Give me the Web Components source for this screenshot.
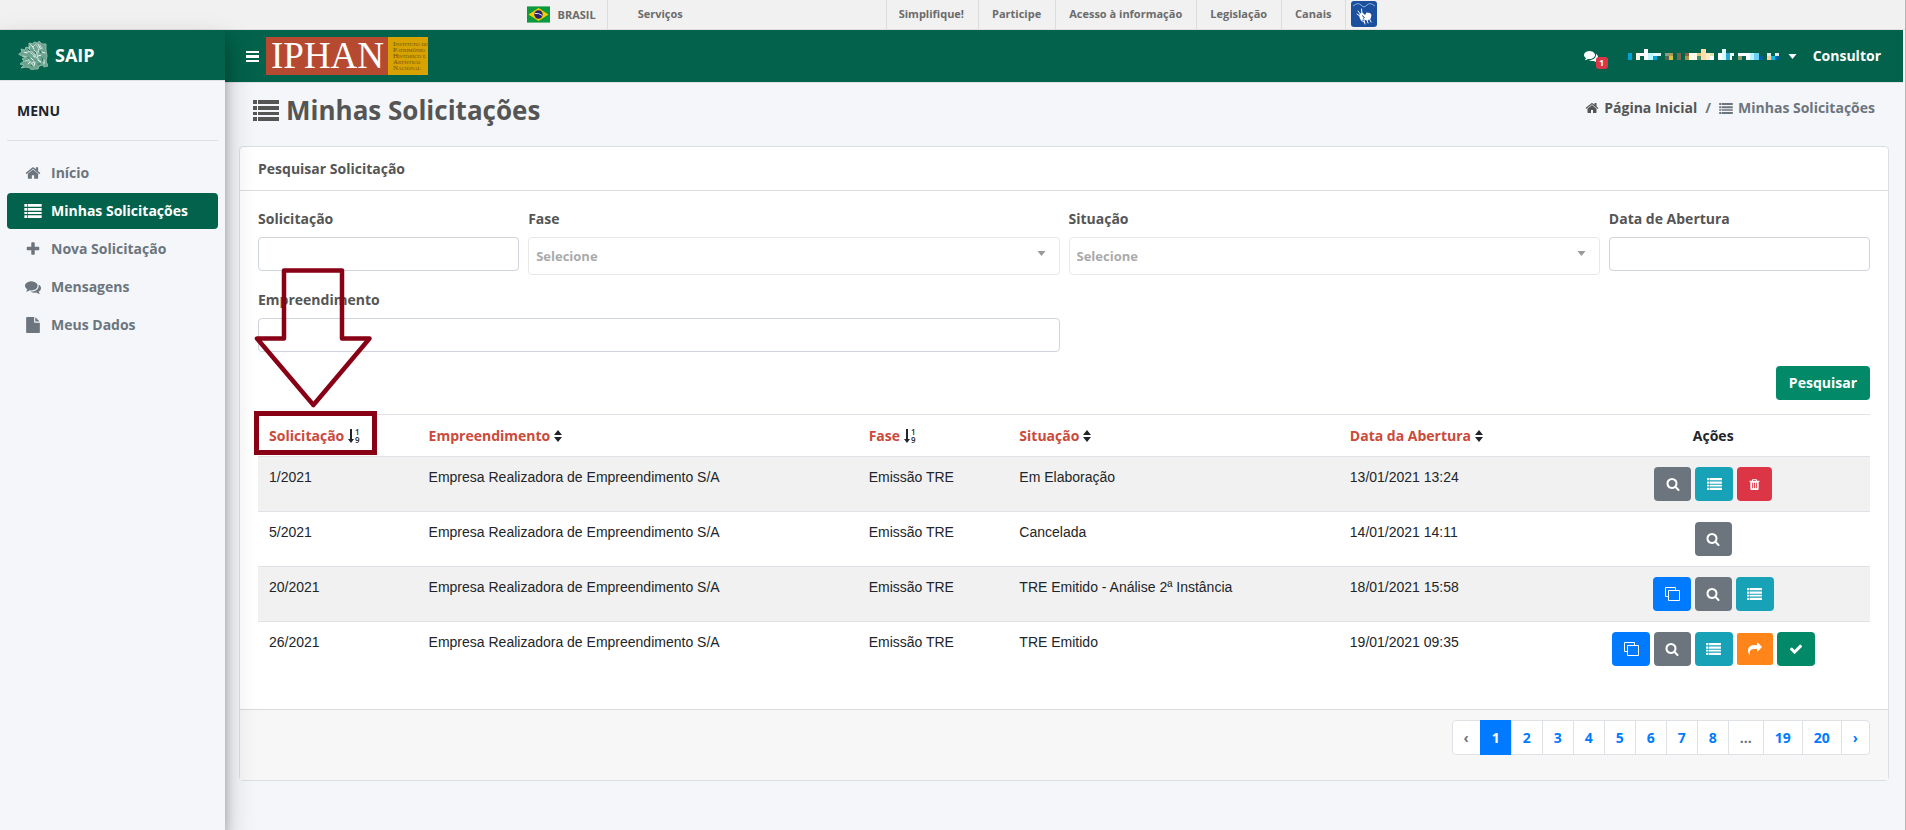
<!DOCTYPE html>
<html lang="pt-BR">
<head>
<meta charset="utf-8">
<title>SAIP - Minhas Solicitações</title>
<style>
  html, body { margin: 0; height: 100%; }
  body { font: 700 14px/22px "Open Sans", "Noto Sans", sans-serif; color: #555; background: #f4f6fa; }
</style>
</head>
<body>
<saip-app></saip-app>

<script>
const define = (name, html, setup) => {
  const tpl = document.createElement('template');
  tpl.innerHTML = `<style>*,*::before{box-sizing:border-box}a{color:inherit;text-decoration:none}</style>${html}`;
  customElements.define(name, class extends HTMLElement {
    constructor() {
      super();
      this.attachShadow({ mode: 'open' }).append(tpl.content.cloneNode(true));
    }
    connectedCallback() {
      if (setup && !this.ready) { this.ready = true; setup(this, this.shadowRoot); }
    }
  });
};

const G = (d) => ['0 0 1792 1792', `<path d="${d}"/>`];
const list = '<path d="M0 0h4v4H0zM5 0h21v4H5zM0 6h4v4H0zM5 6h21v4H5zM0 12h4v3H0zM5 12h21v3H5zM0 17h4v4H0zM5 17h21v4H5z"/>';
const ICONS = {
  list: ['0 0 26 21', list],
  bars: ['0 0 13 11', '<path d="M0 0h13v2H0zM0 4h13v3H0zM0 9h13v2H0z"/>'],
  sort: ['0 0 8 12', '<path d="M4 0l4 5H0zM4 12L0 7h8z"/>'],
  caret: ['0 0 8 5', '<path d="M0 0h8L4 5z"/>'],
  clone: ['0 0 16 16', '<path fill="none" stroke="currentColor" d="M4.500 4.500h11v10h-11zM11.500 4.500v-3h-10v9h3"/>'],
  home: G('M1472 992v480q0 26-19 45t-45 19h-384v-384h-256v384h-384q-26 0-45-19t-19-45v-480q0-1 .5-3t.5-3l575-474 575 474q1 2 1 6zm223-69l-62 74q-8 9-21 11h-3q-13 0-21-7l-692-577-692 577q-12 8-24 7-13-2-21-11l-62-74q-8-10-7-23.500t11-21.500l719-599q32-26 76-26t76 26l244 204v-195q0-14 9-23t23-9h192q14 0 23 9t9 23v408l219 182q10 8 11 21.500t-7 23.500z'),
  plus: G('M1600 736v192q0 40-28 68t-68 28h-416v416q0 40-28 68t-68 28h-192q-40 0-68-28t-28-68v-416h-416q-40 0-68-28t-28-68v-192q0-40 28-68t68-28h416v-416q0-40 28-68t68-28h192q40 0 68 28t28 68v416h416q40 0 68 28t28 68z'),
  comments: G('M1408 768q0 139-94 257t-256.500 186.500-353.500 68.500q-86 0-176-16-124 88-278 128-36 9-86 16h-3q-11 0-20.500-8t-11.500-21q-1-3-1-6.500t.5-6.500 2-6l2.500-5 3.500-5.500 4-5 4.500-5 4-4.500q5-6 23-25t26-29.500 22.500-29 25-38.500 20.500-44q-124-72-195-177t-71-224q0-139 94-257t256.500-186.500 353.500-68.500 353.500 68.500 256.500 186.500 94 257zm384 256q0 120-71 224.500t-195 176.500q10 24 20.500 44t25 38.500 22.500 29 26 29.500 23 25q1 1 4 4.500t4.500 5 4 5 3.500 5.500l2.500 5 2 6 .5 6.500-1 6.500q-3 14-13 22t-22 7q-50-7-86-16-154-40-278-128-90 16-176 16-271 0-472-132 58 4 88 4 161 0 309-45t264-129q125-92 192-212t67-254q0-77-23-152 129 71 204 178t75 230z'),
  file: G('M1152 512v-472q22 14 36 28l408 408q14 14 28 36h-472zm-128 32q0 40 28 68t68 28h544v1056q0 40-28 68t-68 28h-1344q-40 0-68-28t-28-68v-1600q0-40 28-68t68-28h800v544z'),
  search: G('M1216 832q0-185-131.500-316.500t-316.500-131.500-316.500 131.500-131.500 316.500 131.500 316.500 316.500 131.500 316.500-131.500 131.500-316.500zm512 832q0 52-38 90t-90 38q-54 0-90-38l-343-342q-179 124-399 124-143 0-273.500-55.500t-225-150-150-225-55.500-273.500 55.500-273.500 150-225 225-150 273.500-55.500 273.500 55.500 225 150 150 225 55.500 273.500q0 220-124 399l343 343q37 37 37 90z'),
  trash: G('M704 1376v-704q0-14-9-23t-23-9h-64q-14 0-23 9t-9 23v704q0 14 9 23t23 9h64q14 0 23-9t9-23zm256 0v-704q0-14-9-23t-23-9h-64q-14 0-23 9t-9 23v704q0 14 9 23t23 9h64q14 0 23-9t9-23zm256 0v-704q0-14-9-23t-23-9h-64q-14 0-23 9t-9 23v704q0 14 9 23t23 9h64q14 0 23-9t9-23zm-544-992h448l-48-117q-7-9-17-11h-317q-10 2-17 11zm928 32v64q0 14-9 23t-23 9h-96v948q0 83-47 143.500t-113 60.500h-832q-66 0-113-58.500t-47-141.500v-952h-96q-14 0-23-9t-9-23v-64q0-14 9-23t23-9h309l70-167q15-37 54-63t79-26h320q40 0 79 26t54 63l70 167h309q14 0 23 9t9 23z'),
  check: G('M1671 566q0 40-28 68l-724 724-136 136q-28 28-68 28t-68-28l-136-136-362-362q-28-28-28-68t28-68l136-136q28-28 68-28t68 28l294 295 656-657q28-28 68-28t68 28l136 136q28 28 28 68z'),
  share: G('M1792 640q0 26-19 45l-512 512q-19 19-45 19t-45-19-19-45v-256h-224q-98 0-175.500 6t-154 21.500-133 42.500-105.500 69.500-80 101-48.500 138.500-17.500 181q0 55 5 123 0 6 2.500 23.500t2.500 26.500q0 15-8.500 25t-23.500 10q-16 0-28-17-7-9-13-22t-13.500-30-10.500-24q-127-285-127-451 0-199 53-333 162-403 875-403h224v-256q0-26 19-45t45-19 45 19l512 512q19 19 19 45z'),
  numeric: ['0 0 12 14', '<path d="M2 0h2v10h2l-3 4-3-4h2z"/><text x="7" y="6" font-size="8" font-weight="600">1</text><text x="7" y="14" font-size="8" font-weight="600">9</text>'],
};

define('saip-icon', `
  <style>
    :host { display: inline-flex; flex: none; width: 14px; height: 14px; }
    svg { display: block; width: 100%; height: 100%; fill: currentColor; overflow: visible; }
  </style><svg aria-hidden="true"></svg>`, (host, root) => {
  const [box, body] = ICONS[host.getAttribute('name')];
  const svg = root.querySelector('svg');
  svg.setAttribute('viewBox', box);
  svg.innerHTML = body;
});

define('gov-bar', `
  <style>
    :host { display: flex; justify-content: center; height: 30px; padding-right: 1px; background: #f1f1f1; border-bottom: 1px solid #dfdfdf;
            font-size: 11px; line-height: 28px; color: #6b6b6b; white-space: nowrap; }
    a { padding: 0 14px 0 13px; border-right: 1px solid #dcdcdc; }
    .br { display: flex; align-items: center; padding: 0 11px 0 0; gap: 8px; }
    .services { width: 279px; padding-left: 30px; }
    .first { padding-left: 12px; }
    .vlibras { border: 0; padding: 1px 0 0 5px; }
    svg { display: block; flex: none; }
  </style>
  <a class="br" href="#brasil">
    <svg width="23" height="17" viewBox="0 0 23 17"><path fill="#0c9a3e" d="M0 0h23v17H0z"/><path fill="#6dbb84" d="M0 0h23v1H0zM0 16h23v1H0z"/><path fill="#f7c900" d="M11.500 2L21.500 8.500 11.500 15 1.500 8.500z"/><circle cx="11.500" cy="8.500" r="4.200" fill="#2b2173"/><path d="M7.800 7.500q4-.8 7.500 2" fill="none" stroke="#dfe3f2"/></svg>BRASIL</a>
  <a class="services" href="#servicos">Serviços</a>
  <a class="first" href="#simplifique">Simplifique!</a>
  <a href="#participe">Participe</a>
  <a href="#acesso">Acesso à informação</a>
  <a href="#legislacao">Legislação</a>
  <a href="#canais">Canais</a>
  <a class="vlibras" href="#vlibras" aria-label="VLibras">
    <svg width="26" height="26" viewBox="0 0 26 26"><rect width="26" height="26" rx="3" fill="#1b509f"/>
      <path d="M2 5q5-4 8-1t3 1q0 2 3-1t8 1" fill="none" stroke="#8fb0de"/>
      <path d="M7 10l3 4M10.500 8l.5 6M6 13l4 3M10 19l3 2M13 19l1 4M16 19l1 3M18 17l2 4" stroke="#fff" stroke-linecap="round"/>
      <path fill="#fff" d="M8.500 13l3-1.500L14 14l1.500-2.500 3.500.5 1.500 2-1 4-3.500 1.500-3-1-3 .5-1.500-2.500z"/><path d="M11 14.500l2.500 2-1.500 1" fill="none" stroke="#1b509f"/></svg></a>`);

define('nav-item', `
  <style>
    :host { display: block; }
    a { display: flex; align-items: center; height: 36px; margin-bottom: 2px; padding-left: 17px; gap: 9px; border-radius: 4px; color: #6c757d; }
    :host([active]) a { background: #02624b; color: #fff; }
    .i { display: flex; width: 18px; justify-content: center; }
    saip-icon { width: 16px; height: 16px; }
    saip-icon[name=list] { width: 18px; height: 14px; }
  </style>
  <a><span class="i"></span><span><slot></slot></span></a>`, (host, root) => {
  root.querySelector('.i').innerHTML = `<saip-icon name="${host.getAttribute('icon')}"></saip-icon>`;
  root.querySelector('a').href = host.getAttribute('href');
});

define('side-bar', `
  <style>
    :host { display: block; position: relative; z-index: 2; width: 225px; flex: none; background: #f4f6fa;
            box-shadow: 0 14px 28px rgba(0,0,0,.25), 0 10px 10px rgba(0,0,0,.22); }
    .brand { display: flex; align-items: center; gap: 7px; height: 51px; padding-left: 18px; background: #02624b;
             border-bottom: 1px solid #dee2e6; font-size: 18px; color: #fff; }
    .title { color: #212529; padding: 19px 0 18px 10px; }
    nav { padding: 0 7px; }
    .rule { border-top: 1px solid #dcdfe3; padding-top: 14px; }
  </style>
  <a class="brand" href="#saip">
    <svg width="30" height="30" viewBox="0 0 30 30" fill="none" stroke="#c6dcd5" stroke-linecap="round" stroke-linejoin="round">
      <path fill="#6ba38f" stroke="#8fb9a9" d="M1 14l3-2-1-3 4 1 1-3 3 1V3l4 1 1-2 4 1 1-2 3 3 4 0 0 6 1 6-1 5 2 5-4 1-1-2-4 1-1 3-4 0-2 2-2-3-4-1-5 1 3-3-4-1 4-3-2-2 3-1z"/>
      <path d="M12 6q-3 5 2 8t1 9M18 5q4 3 2 8t2 9M9 12q5-2 8 3t-4 9M24 8q-6 2-6 7M5 16q4 0 6 4M16 10l3 3-4 3 5 2M7 21q5-2 8 4M12 4l3 3 3-3M22 5l2 4"/>
      <path stroke="#f1f8f5" d="M14 6l2 3M20 4l2 4M24 12l3 1M13 18l2 2M20 20l3 2M6 12l3 1M10 24l2-2M23 15l-3 1M16 26l1-4M26 20v4"/>
      <path stroke="#1d6f59" d="M10 9l2 2M17 12l1 2M22 11l1 2M9 18l2 0M17 18v3M24 18l1 3M13 25l1 1M20 24h2"/>
    </svg>SAIP</a>
  <nav aria-label="Menu">
    <div class="title">MENU</div>
    <div class="rule">
      <nav-item icon="home" href="#inicio">Início</nav-item>
      <nav-item icon="list" href="#solicitacoes" active>Minhas Solicitações</nav-item>
      <nav-item icon="plus" href="#nova">Nova Solicitação</nav-item>
      <nav-item icon="comments" href="#mensagens">Mensagens</nav-item>
      <nav-item icon="file" href="#dados">Meus Dados</nav-item>
    </div>
  </nav>`);

define('iphan-logo', `
  <style>
    :host { display: flex; height: 38px; font-family: "Liberation Serif", serif; font-weight: 400; white-space: nowrap; }
    .a { width: 122px; background: #b64a31; color: #fff; font-size: 37px; line-height: 38px; padding-left: 5px; }
    .b { width: 40px; background: #d8a200; color: #6b5210; font-size: 7px; line-height: 6px; padding: 4px 0 0 5px; font-variant: small-caps; }
    .b span { display: block; }
  </style>
  <div class="a">IPHAN</div>
  <div class="b"><span>Instituto do</span><span>Patrimônio</span><span>Histórico e</span><span>Artístico</span><span>Nacional</span></div>`);

/* Pixelated user name: [x, y, w, h, colour] on a 4px grid */
const NAME = [[0,4,4,7,'#00a3d6'],[8,4,4,7,'#f7f1e6'],[12,4,4,3,'#fff'],[16,0,4,11,'#fff'],[20,4,5,7,'#bff6ff'],[25,4,8,3,'#e4fbff'],[25,7,4,4,'#00a3d6'],
  [37,4,4,3,'#8a9a88'],[37,7,4,4,'#55644c'],[41,4,4,3,'#b39a48'],[41,7,4,4,'#dfc243'],[49,4,4,7,'#79664f'],[57,4,4,3,'#8b6048'],[57,7,4,4,'#a99445'],
  [61,4,8,7,'#fffbe8'],[69,4,4,3,'#dcc878'],[69,7,4,4,'#438d6b'],[73,0,5,11,'#ffdca8'],[78,4,4,7,'#ffe9c8'],[82,4,4,3,'#dce8b0'],[82,7,4,4,'#fff'],
  [90,4,4,7,'#fff'],[94,0,4,11,'#d8fbff'],[98,4,4,7,'#22a8dd'],[102,4,4,3,'#e9fdff'],[102,7,2,4,'#fff'],[110,4,4,3,'#fff'],[110,7,4,4,'#8a9c73'],
  [114,4,4,3,'#fff'],[118,4,4,7,'#fff'],[122,4,4,7,'#b8f2ff'],[126,4,5,7,'#6ccff5'],[131,7,4,4,'#0060a0'],[139,4,4,3,'#dfeaf0'],[139,7,4,4,'#f5cfa0'],
  [143,7,4,4,'#00c0e8'],[147,4,4,3,'#dfeaf0'],[147,7,4,4,'#0060a0']];

define('top-header', `
  <style>
    :host { display: flex; align-items: center; height: 53px; padding: 0 22px 0 21px; background: #02624b; border-bottom: 1px solid #dee2e6; color: #fff; }
    button { display: flex; padding: 0; margin-right: 7px; border: 0; background: none; color: #fff; }
    saip-icon[name=bars] { width: 13px; height: 11px; }
    .right { display: flex; align-items: center; margin-left: auto; }
    .msg { position: relative; display: flex; width: 14px; height: 14px; margin-right: 30px; }
    .badge { position: absolute; left: 12px; top: 8px; width: 12px; height: 12px; border-radius: 3px; background: #dc3545; font-size: 9px; line-height: 12px; text-align: center; }
    .user { display: flex; align-items: center; gap: 9px; margin-right: 16px; }
    saip-icon[name=caret] { width: 9px; height: 5px; }
  </style>
  <button type="button" aria-label="Abrir menu"><saip-icon name="bars"></saip-icon></button>
  <iphan-logo></iphan-logo>
  <div class="right">
    <a class="msg" href="#mensagens" aria-label="Mensagens"><saip-icon name="comments"></saip-icon><span class="badge">1</span></a>
    <a class="user" href="#perfil" aria-label="Usuário"><svg width="151" height="15" viewBox="0 0 151 15">${NAME.map(([x, y, w, h, c]) => `<rect x="${x}" y="${y}" width="${w}" height="${h}" fill="${c}"/>`).join('')}</svg><saip-icon name="caret"></saip-icon></a>
    <a href="#consultor">Consultor</a>
  </div>`);

define('page-title', `
  <style>
    :host { display: flex; justify-content: space-between; align-items: flex-start; height: 63px; padding: 7px 28px 0; }
    h1 { display: flex; align-items: center; gap: 7px; margin: 0; font-size: 26px; line-height: 40px; }
    h1 saip-icon { width: 26px; height: 21px; }
    nav { display: flex; align-items: center; line-height: 36px; }
    a, .here { display: flex; align-items: center; gap: 5px; }
    .sep, .here { color: #6c757d; }
    .sep { padding: 0 8px; }
    .here saip-icon { width: 14px; height: 11px; }
  </style>
  <h1><saip-icon name="list"></saip-icon>Minhas Solicitações</h1>
  <nav aria-label="Trilha"><a href="#inicio"><saip-icon name="home"></saip-icon>Página Inicial</a><span class="sep">/</span><span class="here"><saip-icon name="list"></saip-icon>Minhas Solicitações</span></nav>`);

define('form-field', `
  <style>
    :host { display: block; }
    label { display: block; line-height: 20px; margin-bottom: 8px; }
    input, select { display: block; width: 100%; height: 34px; border: 1px solid #ced4da; border-radius: 4px; background: #fff; font: inherit; color: #495057; padding: 0 8px; }
    .wrap { position: relative; }
    select { appearance: none; height: 38px; border-color: #e8e8e8; font-size: 13px; color: #aaa; padding: 0 7px; }
    saip-icon { position: absolute; right: 14px; top: 14px; width: 9px; height: 5px; color: #999; pointer-events: none; }
  </style><label for="c"></label><div class="wrap"></div>`, (host, root) => {
  root.querySelector('label').textContent = host.getAttribute('label');
  root.querySelector('.wrap').innerHTML = host.hasAttribute('select')
    ? '<select id="c"><option>Selecione</option></select><saip-icon name="caret"></saip-icon>'
    : '<input id="c" type="text">';
});

define('search-form', `
  <style>
    :host { display: block; }
    .grid { display: grid; grid-template-columns: repeat(6, 1fr); gap: 15px 9px; }
    .w2 { grid-column: span 2; }
    .w3 { grid-column: 1 / span 3; }
    .actions { display: flex; justify-content: flex-end; margin: 14px 0; }
    button { height: 34px; padding: 0 13px; border: 0; border-radius: 4px; background: #028a68; color: #fff; font: inherit; }
  </style>
  <form onsubmit="return false">
    <div class="grid">
      <form-field label="Solicitação"></form-field>
      <form-field class="w2" label="Fase" select></form-field>
      <form-field class="w2" label="Situação" select></form-field>
      <form-field label="Data de Abertura"></form-field>
      <form-field class="w3" label="Empreendimento"></form-field>
    </div>
    <div class="actions"><button type="submit">Pesquisar</button></div>
  </form>`);

const KIND = {
  clone: ['#007bff', 'Clonar'], search: ['#6c757d', 'Visualizar'], list: ['#17a2b8', 'Detalhar'],
  trash: ['#dc3545', 'Excluir'], share: ['#ff851b', 'Encaminhar'], check: ['#028a68', 'Confirmar'],
};
define('action-button', `
  <style>
    :host { display: block; }
    button { display: flex; align-items: center; justify-content: center; width: 38px; height: 34px; padding: 0; border: 0; border-radius: 4px; color: #fff; }
    .search { width: 37px; }
    .trash { width: 35px; }
    .share { width: 36px; height: 32px; border-radius: 2px; }
    .list saip-icon { width: 15px; height: 12px; }
    .clone saip-icon { width: 16px; height: 16px; }
    .trash saip-icon { width: 13px; height: 13px; }
  </style><button type="button"></button>`, (host, root) => {
  const kind = host.getAttribute('kind'), b = root.querySelector('button');
  b.className = kind;
  b.style.background = KIND[kind][0];
  b.setAttribute('aria-label', KIND[kind][1]);
  b.innerHTML = `<saip-icon name="${kind}"></saip-icon>`;
});

const HEAD = [['Solicitação', 'numeric'], ['Empreendimento', 'sort'], ['Fase', 'numeric'], ['Situação', 'sort'], ['Data da Abertura', 'sort']];
const ROWS = [
  ['1/2021', 'Em Elaboração', '13/01/2021 13:24', 'search list trash'],
  ['5/2021', 'Cancelada', '14/01/2021 14:11', 'search'],
  ['20/2021', 'TRE Emitido - Análise 2ª Instância', '18/01/2021 15:58', 'clone search list'],
  ['26/2021', 'TRE Emitido', '19/01/2021 09:35', 'clone search list share check'],
];
define('request-table', `
  <style>
    :host { display: block; position: relative; }
    table { width: 100%; table-layout: fixed; border-collapse: collapse; color: #212529; }
    th, td { border-top: 1px solid #dee2e6; padding: 10px 11px; text-align: left; vertical-align: top; }
    th { line-height: 21px; }
    th:last-child { text-align: center; }
    th a { color: #cb4a3a; }
    th div { display: flex; align-items: center; gap: 4px; }
    saip-icon[name=sort] { width: 8px; height: 12px; }
    saip-icon[name=numeric] { width: 12px; height: 14px; }
    td { font: 400 14px/20px "Liberation Sans", Arial, sans-serif; }
    tbody tr:nth-child(odd) { background: #f1f1f1; }
    .acts { display: flex; gap: 4px; justify-content: center; align-items: center; }
    .c1 { width: 9.9% } .c2 { width: 27.3% } .c3 { width: 9.35% } .c4 { width: 20.5% } .c5 { width: 13.5% }
  </style>
  <table>
    <colgroup><col class="c1"><col class="c2"><col class="c3"><col class="c4"><col class="c5"><col></colgroup>
    <thead><tr>${HEAD.map(([t, i]) => `<th scope="col"><div><a href="#ordenar">${t}</a><saip-icon name="${i}"></saip-icon></div></th>`).join('')}<th scope="col">Ações</th></tr></thead>
    <tbody>${ROWS.map(([n, s, d, a]) => `<tr><td>${n}</td><td>Empresa Realizadora de Empreendimento S/A</td><td>Emissão TRE</td><td>${s}</td><td>${d}</td><td><div class="acts">${a.split(' ').map(k => `<action-button kind="${k}"></action-button>`).join('')}</div></td></tr>`).join('')}</tbody>
  </table>
  <highlight-note></highlight-note>`);

/* Arrow and frame laid over the first column's heading */
define('highlight-note', `
  <style>
    :host { position: absolute; left: -8px; top: -150px; width: 130px; height: 194px; pointer-events: none; }
    svg { display: block; }
  </style>
  <svg width="130" height="194" viewBox="0 0 130 194" fill="none" stroke="#880015" stroke-linejoin="round">
    <path stroke-width="4.500" d="M34 6.500H92V74.500H119.500L63.400 141 7 74.500H34Z"/>
    <path stroke-width="5" stroke-linejoin="miter" d="M6.500 149.500H124.500V188.500H6.500Z"/>
  </svg>`);

define('page-nav', `
  <style>
    :host { display: flex; justify-content: flex-end; }
    nav { display: flex; height: 35px; }
    a, span { padding: 0 11px; border: 1px solid #dee2e6; margin-left: -1px; background: #fff; line-height: 33px; color: #007bff; }
    span { color: #6c757d; }
    nav > :first-child { border-radius: 4px 0 0 4px; }
    nav > :last-child { border-radius: 0 4px 4px 0; }
    .on { background: #007bff; border-color: #007bff; color: #fff; }
  </style>
  <nav aria-label="Paginação"><span>‹</span><a class="on" href="#p1" aria-current="page">1</a>${[2, 3, 4, 5, 6, 7, 8].map(n => `<a href="#p${n}">${n}</a>`).join('')}<span>...</span><a href="#p19">19</a><a href="#p20">20</a><a href="#p2" aria-label="Próxima">›</a></nav>`);

define('content-card', `
  <style>
    :host { display: block; margin: 0 14px; border: 1px solid #dcdfe1; border-radius: 4px; background: #fff; }
    header { padding: 11px 18px 10px; border-bottom: 1px solid #dcdfe1; }
    .body { padding: 18px 18px 33px; }
    footer { padding: 10px 18px 25px; border-top: 1px solid #d8dadc; background: #f7f7f7; }
  </style>
  <header><slot name="title"></slot></header>
  <div class="body"><slot></slot></div>
  <footer><slot name="footer"></slot></footer>`);

define('saip-app', `
  <style>
    :host { display: flex; flex-direction: column; min-height: 100vh; border-right: 1px solid #b8b8b8; }
    .cols { display: flex; flex: 1; padding-right: 2px; }
    .main { flex: 1; min-width: 0; padding-bottom: 24px; }
  </style>
  <gov-bar></gov-bar>
  <div class="cols">
    <side-bar></side-bar>
    <div class="main">
      <top-header></top-header>
      <main>
        <page-title></page-title>
        <content-card>
          <span slot="title">Pesquisar Solicitação</span>
          <search-form></search-form>
          <request-table></request-table>
          <page-nav slot="footer"></page-nav>
        </content-card>
      </main>
    </div>
  </div>`);
</script>
</body>
</html>
